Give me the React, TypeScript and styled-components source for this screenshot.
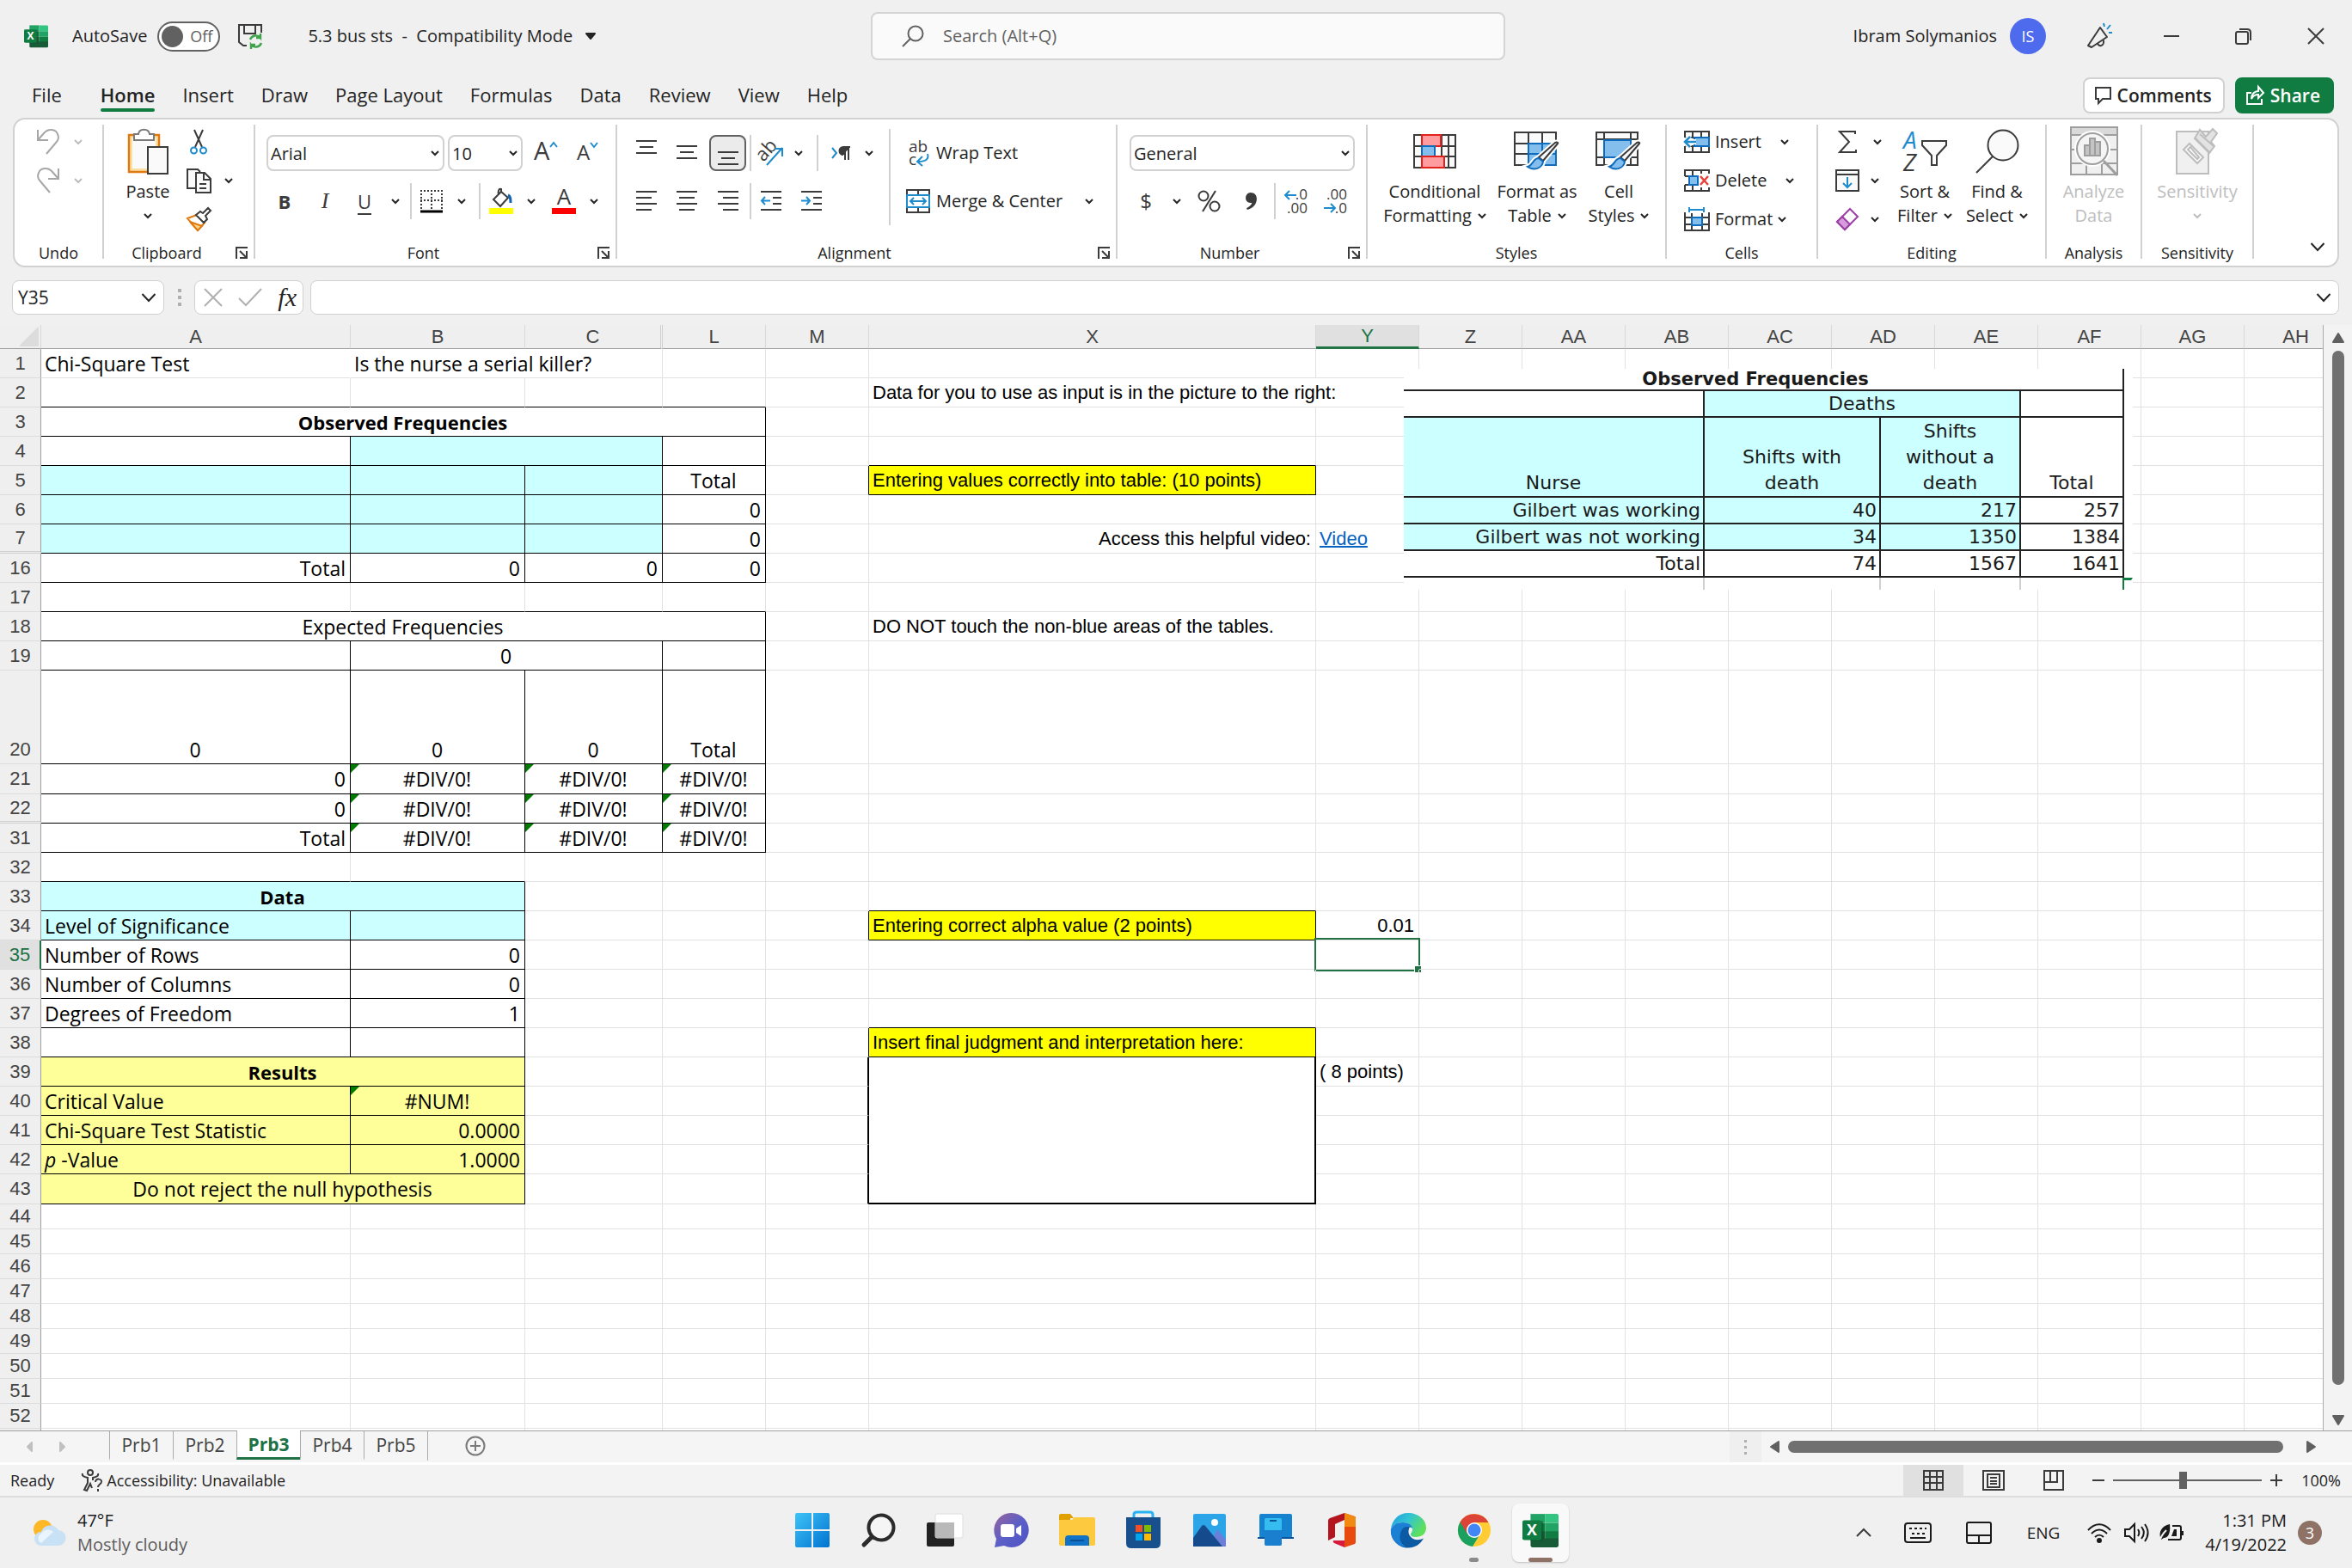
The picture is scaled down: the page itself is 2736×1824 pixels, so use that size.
import React from 'react';
import styled, { createGlobalStyle, css } from 'styled-components';

const ui = '"Open Sans", "Noto Sans", sans-serif';
const arial = '"Liberation Sans", Arial, sans-serif';
const ink = '#242424';
const green = '#107c41';
const blue = '#1e8bcd';

const Global = createGlobalStyle`
  *, *::before, *::after { box-sizing: border-box; }
  html, body { margin: 0; padding: 0; background: #f0f0f0; }
  button, input, select { font: inherit; color: inherit; margin: 0; }
  button { border: 0; background: none; padding: 0; }
  svg { display: block; flex: none; overflow: visible; }
`;

const Shell = styled.div`
  display: flex;
  flex-direction: column;
  height: 100vh;
  overflow: hidden;
  background: #f0f0f0;
  color: ${ink};
  font-family: ${ui};
  font-size: 20px;
  line-height: 28px;
`;

/* ---------- title bar ---------- */
const TitleBar = styled.header`
  display: grid;
  grid-template-columns: minmax(0, 1fr) 738px 985px;
  align-items: center;
  height: 84px;
  flex: none;
`;
const TitleLeft = styled.div`
  display: flex;
  align-items: center;
  padding-left: 28px;
  white-space: nowrap;
`;
const AutoSave = styled.label`
  display: flex;
  align-items: center;
  gap: 12px;
  margin: 0 20px 0 28px;
`;
const SwitchBox = styled.span`
  display: grid;
  align-items: center;
  > * { grid-area: 1 / 1; }
  > span { justify-self: end; padding-right: 9px; color: #616161; font-size: 18px; }
`;
const Switch = styled.input`
  appearance: none;
  width: 73px;
  height: 35px;
  border: 2px solid #616161;
  border-radius: 18px;
  background: #fff;
  padding: 3px;
  &::before {
    content: '';
    display: block;
    width: 25px;
    height: 25px;
    border-radius: 50%;
    background: #616161;
  }
`;
const DocName = styled.button`
  display: flex;
  align-items: center;
  gap: 10px;
  margin-left: 52px;
  white-space: pre;
`;
const SearchBox = styled.label`
  display: flex;
  align-items: center;
  height: 56px;
  gap: 20px;
  padding-left: 34px;
  border: 2px solid #d4d4d4;
  border-radius: 8px;
  background: #fafafa;
  input {
    flex: 1;
    border: 0;
    outline: 0;
    background: none;
    &::placeholder { color: #616161; opacity: 1; }
  }
`;
const TitleRight = styled.div`
  display: flex;
  align-items: center;
  justify-content: flex-end;
`;
const Avatar = styled.span`
  display: grid;
  place-items: center;
  width: 42px;
  height: 42px;
  margin: 0 20px 0 15px;
  border-radius: 50%;
  background: #4f6bed;
  color: #fff;
  font-size: 18px;
`;
const WindowButton = styled.button`
  display: grid;
  place-items: center;
  width: 84px;
  height: 84px;
`;

/* ---------- ribbon tabs ---------- */
const TabRow = styled.nav`
  display: flex;
  align-items: center;
  height: 53px;
  flex: none;
  padding: 0 21px;
`;
const RibbonTab = styled.button<{ $active?: boolean; $first?: boolean }>`
  display: flex;
  flex-direction: column;
  align-items: stretch;
  padding: 2px 16px 0;
  margin-right: ${p => (p.$first ? 13 : 0)}px;
  font-size: 22px;
  line-height: 32px;
  font-weight: ${p => (p.$active ? 600 : 400)};
  &::after {
    content: '';
    height: 4px;
    border-radius: 2px;
    background: ${p => (p.$active ? green : 'transparent')};
  }
`;
const TabSpacer = styled.div`flex: 1;`;
const Pill = styled.button<{ $primary?: boolean }>`
  display: flex;
  align-items: center;
  gap: 7px;
  height: 42px;
  margin-left: 12px;
  padding: 0 ${p => (p.$primary ? 14 : 13)}px 0 ${p => (p.$primary ? 11 : 12)}px;
  border: 2px solid ${p => (p.$primary ? green : '#d1d1d1')};
  border-radius: 8px;
  background: ${p => (p.$primary ? green : '#fff')};
  color: ${p => (p.$primary ? '#fff' : ink)};
  font-weight: 600;
  font-size: 21px;
`;

/* ---------- ribbon ---------- */
const Ribbon = styled.section`
  display: flex;
  flex: none;
  height: 174px;
  margin: 0 15px;
  padding-top: 3px;
  border: 2px solid #d1d1d1;
  border-radius: 14px;
  background: #fff;
`;
const Rule = styled.i`
  width: 2px;
  flex: none;
  margin: 3px 0 8px;
  background: #d1d1d1;
`;
const GroupBox = styled.div<{ $w: number }>`
  display: flex;
  flex-direction: column;
  flex: none;
  width: ${p => p.$w}px;
`;
const GroupBody = styled.div<{ $pad?: number }>`
  display: flex;
  height: 138px;
  padding-left: ${p => p.$pad ?? 0}px;
`;
const GroupLabel = styled.div`
  display: flex;
  align-items: center;
  height: 28px;
  font-size: 18px;
  > span { flex: 1; text-align: center; }
  > button { width: 28px; display: grid; place-items: center; }
`;
const Stack = styled.div<{ $two?: boolean }>`
  display: flex;
  flex-direction: column;
  padding-top: ${p => (p.$two ? 8 : 0)}px;
`;
const Row = styled.div<{ $two?: boolean; $pad?: number }>`
  display: flex;
  align-items: center;
  height: ${p => (p.$two ? 56 : 45)}px;
  padding-left: ${p => p.$pad ?? 0}px;
`;
const Tool = styled.button<{ $w: number }>`
  display: grid;
  place-items: center;
  width: ${p => p.$w}px;
  height: 42px;
`;
const PressedTool = styled(Tool)`
  margin: 0 3px;
  border: 2px solid #616161;
  border-radius: 8px;
  background: #ebebeb;
`;
const Glyph = styled.span<{ $kind?: 'b' | 'i' | 'u' }>`
  font-size: 24px;
  color: #3b3b3b;
  ${p => p.$kind === 'b' && css`font-size: 22px; font-weight: 700;`}
  ${p => p.$kind === 'i' && css`font-family: "Liberation Serif", serif; font-style: italic; font-size: 26px;`}
  ${p => p.$kind === 'u' && css`font-size: 22px; text-decoration: underline; text-decoration-thickness: 2px; text-underline-offset: 5px;`}
`;
const Bar = styled.i<{ $gap: number; $h?: number }>`
  width: 2px;
  height: ${p => p.$h ?? 42}px;
  flex: none;
  margin: 0 ${p => p.$gap}px;
  background: #d1d1d1;
`;
const SelectBox = styled.label<{ $w: number }>`
  display: grid;
  align-items: center;
  width: ${p => p.$w}px;
  margin-right: 4px;
  > * { grid-area: 1 / 1; }
  > svg { justify-self: end; margin-right: 6px; pointer-events: none; }
  > select {
    appearance: none;
    width: 100%;
    height: 42px;
    padding: 2px 3px 0;
    border: 2px solid #d1d1d1;
    border-radius: 8px;
    background: #fff;
  }
`;
const TextTool = styled.button<{ $gap?: number }>`
  display: flex;
  align-items: center;
  height: 42px;
  white-space: nowrap;
  > span:first-child { width: 34px; margin-right: 4px; display: grid; place-items: center; }
  > svg:last-child { margin-left: ${p => p.$gap ?? 8}px; }
`;
const BigTool = styled.button<{ $w: number; $off?: boolean }>`
  display: flex;
  flex-direction: column;
  align-items: center;
  width: ${p => p.$w}px;
  height: 138px;
  color: ${p => (p.$off ? '#bdbdbd' : ink)};
  > i { height: 67px; display: grid; place-items: center; }
  > span { display: flex; align-items: center; gap: 7px; height: 28px; white-space: nowrap; }
`;
const Collapse = styled.button`
  margin: auto 14px 16px auto;
`;

/* ---------- formula bar ---------- */
const FormulaBar = styled.div`
  display: flex;
  align-items: center;
  flex: none;
  height: 67px;
  padding: 2px 15px 0 14px;
`;
const Field = styled.div<{ $w?: number }>`
  display: flex;
  align-items: center;
  ${p => (p.$w ? `width: ${p.$w}px;` : 'flex: 1; min-width: 0;')}
  height: 40px;
  border: 1px solid #d1d1d1;
  border-radius: 8px;
  background: #fff;
  padding: 0 8px 0 6px;
  font-size: 21px;
  input { flex: 1; min-width: 0; border: 0; outline: 0; background: none; padding: 0; }
`;
const Dots = styled.span`
  display: grid;
  gap: 4px;
  justify-content: center;
  width: 35px;
  > i { width: 4px; height: 4px; background: #b0b0b0; }
`;
const FxTools = styled(Field)`
  justify-content: space-between;
  margin-right: 8px;
  padding: 0 7px 0 10px;
`;
const Fx = styled.button`
  font-family: "Liberation Serif", serif;
  font-style: italic;
  font-size: 30px;
  line-height: 34px;
`;

/* ---------- worksheet ---------- */
const SheetArea = styled.main`
  display: flex;
  flex: 1;
  min-height: 0;
`;
const Viewport = styled.div`
  position: relative;
  flex: 1;
  min-width: 0;
  overflow: hidden;
  background: #fff;
  border-right: 1px solid #ababab;
`;
const Grid = styled.table`
  table-layout: fixed;
  width: 0;
  border-collapse: separate;
  border-spacing: 0;
  font-family: ${arial};
  font-size: 22px;
  line-height: 28px;
  color: #000;
`;
const ColHead = styled.th<{ $on?: boolean; $double?: boolean }>`
  height: 28px;
  padding: 0;
  font-weight: 400;
  color: ${p => (p.$on ? '#1b7245' : '#444')};
  background: ${p => (p.$on ? '#e0e0e0' : '#efefef')};
  border-right: ${p => (p.$double ? '3px double #cfcfcf' : '1px solid #d8d8d8')};
  border-bottom: ${p => (p.$on ? '3px solid #217346' : '1px solid #9f9f9f')};
  line-height: 24px;
`;
const Corner = styled(ColHead)`
  > svg { margin-left: 23px; }
`;
const RowHead = styled.th<{ $on?: boolean; $double?: boolean; $low?: boolean }>`
  padding: 0 0 ${p => (p.$low ? 2 : 0)}px;
  font-weight: 400;
  vertical-align: ${p => (p.$low ? 'bottom' : 'middle')};
  color: ${p => (p.$on ? '#1b7245' : '#444')};
  background: ${p => (p.$on ? '#e0e0e0' : '#efefef')};
  border-right: ${p => (p.$on ? '2px solid #217346' : '1px solid #9f9f9f')};
  border-bottom: ${p => (p.$double ? '3px double #cfcfcf' : '1px solid #dcdcdc')};
`;
type Look = { $align?: string; $bg?: string; $edge?: string; $arial?: boolean; $bold?: boolean; $low?: boolean };
const line = '#e1e1e1';
const Cell = styled.td<Look>`
  position: relative;
  padding: 0 5px ${p => (p.$low ? 2 : 0)}px 4px;
  white-space: nowrap;
  text-align: ${p => p.$align ?? 'left'};
  vertical-align: ${p => (p.$low ? 'bottom' : 'middle')};
  background: ${p => p.$bg ?? 'transparent'};
  font-family: ${p => (p.$arial ? arial : ui)};
  font-size: ${p => (p.$arial || p.$bold ? 22 : 23)}px;
  font-weight: ${p => (p.$bold ? 700 : 400)};
  border-right: ${p => (p.$edge?.includes('R') ? 2 : 1)}px solid ${p => (/r/i.test(p.$edge ?? '') ? '#000' : p.$edge?.includes('n') ? 'transparent' : line)};
  border-bottom: ${p => (p.$edge?.includes('B') ? 2 : 1)}px solid ${p => (/b/i.test(p.$edge ?? '') ? '#000' : line)};
  a { color: #0563c1; text-decoration-thickness: 2px; }
`;
const ErrorFlag = styled.i`
  position: absolute;
  left: 0;
  top: 0;
  border-top: 10px solid #007a00;
  border-right: 10px solid transparent;
`;
const Selection = styled.i`
  position: absolute;
  inset: -3px -2px -3px -2px;
  border: 2px solid #217346;
  &::after {
    content: '';
    position: absolute;
    right: -3px;
    bottom: -3px;
    width: 8px;
    height: 8px;
    background: #217346;
    border: 1px solid #fff;
    border-width: 1px 0 0 1px;
  }
`;
const Picture = styled.table`
  position: absolute;
  left: 1633px;
  top: 51px;
  width: 848px;
  table-layout: fixed;
  border-collapse: separate;
  border-spacing: 0;
  background: #fff;
  color: #1a1a1a;
  font-family: "DejaVu Sans", sans-serif;
  font-size: 22px;
  line-height: 28px;
`;
const PCell = styled.td<{ $blue?: boolean; $a?: string; $tall?: boolean }>`
  padding: 0 3px;
  text-align: ${p => p.$a ?? 'right'};
  vertical-align: bottom;
  white-space: nowrap;
  line-height: ${p => (p.$tall ? 30 : 28)}px;
  background: ${p => (p.$blue ? '#ccffff' : '#fff')};
  border-bottom: 2px solid #222;
  border-right: 2px solid #222;
`;
const PTitle = styled(PCell)`
  padding: 0 18px 0 0;
  font-size: 21px;
  font-weight: 700;
  line-height: 24px;
`;
const PEdge = styled.td<{ $c?: string; $green?: boolean }>`
  padding: 0;
  border-right: 2px solid ${p => p.$c ?? 'transparent'};
  border-top: ${p => (p.$green ? '3px solid #107c41' : '0')};
`;
const VScroll = styled.div`
  display: flex;
  flex-direction: column;
  align-items: center;
  width: 33px;
  padding: 8px 0 5px;
  background: #f3f3f3;
`;
const VThumb = styled.div`
  flex: 1;
  width: 14px;
  margin: 8px 0 34px;
  border-radius: 7px;
  background: #707070;
`;

/* ---------- sheet tabs and status bar ---------- */
const SheetTabs = styled.div`
  display: flex;
  align-items: center;
  flex: none;
  height: 40px;
  border-top: 1px solid #9f9f9f;
  border-bottom: 3px solid #fff;
  background: #f5f5f5;
`;
const TabArrows = styled.div`
  display: flex;
  gap: 29px;
  width: 127px;
  padding-left: 30px;
`;
const SheetTab = styled.button<{ $on?: boolean }>`
  align-self: flex-start;
  width: 74px;
  height: 34px;
  margin-top: ${p => (p.$on ? -1 : 0)}px;
  border-left: 1px solid #ababab;
  border-bottom: 3px solid ${p => (p.$on ? '#217346' : 'transparent')};
  background: ${p => (p.$on ? '#fff' : 'transparent')};
  color: ${p => (p.$on ? '#1b7245' : '#444')};
  font-weight: ${p => (p.$on ? 700 : 400)};
  font-size: 21px;
  line-height: 30px;
`;
const AddSheet = styled.button`
  height: 34px;
  align-self: flex-start;
  padding-left: 43px;
  border-left: 1px solid #ababab;
`;
const HScroll = styled.div`
  display: flex;
  align-items: center;
  width: 724px;
  margin-left: auto;
  padding-right: 41px;
`;
const HDots = styled(Dots)`
  width: 37px;
  height: 36px;
  align-content: center;
  background: #efefef;
  > i { width: 3px; height: 3px; }
`;
const HThumb = styled.div`
  flex: 1;
  height: 14px;
  margin: 0 26px 0 9px;
  border-radius: 7px;
  background: #707070;
`;
const StatusBar = styled.footer`
  display: flex;
  align-items: center;
  flex: none;
  height: 36px;
  padding: 0 13px 0 12px;
  background: #f3f3f3;
  font-size: 18px;
`;
const Access = styled.button`
  display: flex;
  align-items: center;
  gap: 4px;
  margin: 0 auto 0 31px;
`;
const ViewButton = styled.button<{ $on?: boolean }>`
  display: grid;
  place-items: center;
  width: 70px;
  height: 36px;
  background: ${p => (p.$on ? '#e0e0e0' : 'transparent')};
`;
const ZoomStep = styled.button`
  display: grid;
  place-items: center;
  width: 34px;
`;
const Zoom = styled.input`
  appearance: none;
  width: 173px;
  height: 20px;
  background: linear-gradient(#616161, #616161) center / 100% 2px no-repeat;
  &::-webkit-slider-thumb {
    appearance: none;
    width: 9px;
    height: 20px;
    background: #616161;
  }
`;
const ZoomValue = styled.output`
  width: 58px;
  text-align: right;
`;

/* ---------- taskbar ---------- */
const Taskbar = styled.footer`
  display: grid;
  grid-template-columns: 1fr auto 1fr;
  align-items: center;
  flex: none;
  height: 84px;
  border-top: 2px solid #dedede;
  background: #f0f0f0;
`;
const Weather = styled.button`
  display: flex;
  align-items: center;
  gap: 14px;
  padding-left: 38px;
  text-align: left;
  color: #1a1a1a;
  span { display: block; }
  span + span { color: #5c5c5c; }
`;
const Dock = styled.div`
  display: flex;
  gap: 11px;
`;
const DockButton = styled.button<{ $on?: boolean; $dot?: string; $dw?: number }>`
  display: grid;
  grid-template-rows: 62px 6px;
  justify-items: center;
  align-items: center;
  width: 66px;
  height: 68px;
  border-radius: 8px;
  background: ${p => (p.$on ? '#f9f9f9' : 'transparent')};
  box-shadow: ${p => (p.$on ? '0 1px 2px rgba(0,0,0,0.2)' : 'none')};
  &::after {
    content: '';
    width: ${p => p.$dw ?? 0}px;
    height: 5px;
    border-radius: 3px;
    background: ${p => p.$dot ?? 'transparent'};
  }
`;
const Tray = styled.div`
  display: flex;
  align-items: center;
  justify-content: flex-end;
  padding-right: 35px;
  color: #1a1a1a;
`;
const TrayButton = styled.button<{ $w: number }>`
  display: grid;
  place-items: center;
  width: ${p => p.$w}px;
  font-size: 19px;
`;
const Clock = styled.button`
  text-align: right;
  margin: 0 13px 0 12px;
  width: 101px;
`;
const Badge = styled.span`
  display: grid;
  place-items: center;
  width: 28px;
  height: 28px;
  border-radius: 50%;
  background: #8e7265;
  color: #fff;
  font-size: 18px;
`;

/* ---------- icons ---------- */
type IconProps = { w: number; h: number; children: React.ReactNode; s?: string; sw?: number };
const Ico = ({ w, h, children, s = '#3b3b3b', sw = 2 }: IconProps) => (
  <svg width={w} height={h} viewBox={`0 0 ${w} ${h}`} fill="none" stroke={s} strokeWidth={sw}>{children}</svg>
);
const Chev = ({ c = ink, big }: { c?: string; big?: boolean }) =>
  big ? <Ico w={18} h={12} s={c}><path d="M1.500 2l7.500 8 7.500-8" /></Ico> : <Ico w={10} h={8} s={c}><path d="M1 2l4 4 4-4" /></Ico>;
const Excel = ({ size }: { size: number }) => (
  <svg width={size} height={size} viewBox="0 0 40 40">
    <path d="M9 2h16v10H9z" fill="#21a366" /><path d="M25 2h13a2 2 0 012 2v8H25z" fill="#33c481" />
    <path d="M9 12h16v9H9z" fill="#107c41" /><path d="M25 12h15v9H25z" fill="#21a366" />
    <path d="M9 21h16v9H9z" fill="#185c37" /><path d="M25 21h15v9H25z" fill="#107c41" />
    <path d="M9 29h31v8a2 2 0 01-2 2H11a2 2 0 01-2-2z" fill="#185c37" />
    <rect x="9" y="10" width="14" height="22" fill="#0b4a29" opacity=".5" />
    <rect x="0" y="9" width="21" height="22" rx="2" fill="#107c41" />
    <text x="10.500" y="26" fontSize="17" fontWeight="700" fill="#fff" textAnchor="middle" fontFamily={ui}>X</text>
  </svg>
);
const Save = () => (
  <Ico w={30} h={30}>
    <path d="M11 26H7l-5-4V2h26v9M8 2v10h13V2" />
    <g stroke="#3fa34d" strokeWidth="2.400"><path d="M15 19a7 7 0 0112-2v-5M27 17h-5M28 23a7 7 0 01-12 2v5M16 25h5" /></g>
  </Ico>
);
const Pen = () => (
  <Ico w={30} h={30}>
    <path d="M16 5l8 11L6 28l-4-2zM13 23c1 5 8 4 7-3" strokeLinejoin="round" />
    <path d="M20 0l1 4M28 2l-4 5M26 11h4" stroke={blue} />
  </Ico>
);
const Launcher = () => <Ico w={14} h={14}><path d="M1 14V1h13M5 5l8 8M13 5v8H5" /></Ico>;
const UndoIcon = ({ flip }: { flip?: boolean }) => (
  <Ico w={28} h={30} s="#a6a6a6">
    <path d={flip ? 'M26 1v12H14M26 13l-7-8C14-1 5 0 3 6c-2 4 0 8 2 10l11 13' : 'M2 1v12h12M2 13l7-8c5-6 14-5 16 1 2 4 0 8-2 10L12 29'} />
  </Ico>
);
const Clipboard = () => (
  <Ico w={48} h={54}>
    <rect x="2" y="8" width="35" height="43" fill="#fbe0a4" stroke="#e07a10" strokeWidth="2.500" />
    <rect x="6" y="12" width="27" height="35" fill="#fafafa" stroke="none" />
    <path d="M8 14V7h5c1-7 12-7 13 0h5v7z" fill="#fff" stroke="#7a7a7a" />
    <rect x="24" y="22" width="23" height="31" fill="#fafafa" />
  </Ico>
);
const Cut = () => (
  <Ico w={20} h={30}>
    <path d="M5 1l9 20M15 1L6 21" /><circle cx="4.500" cy="25" r="3.500" stroke={blue} /><circle cx="15.500" cy="25" r="3.500" stroke={blue} />
  </Ico>
);
const Copy = () => (
  <Ico w={30} h={30}>
    <path d="M11 24H2V2h12l3 3" fill="#fafafa" /><path d="M12 6h10l7 7v16H12zM21 6v8h8M16 19h8M16 24h8" fill="#fafafa" />
  </Ico>
);
const Brush = () => (
  <Ico w={30} h={28}>
    <path d="M2 13l11-4 9 9-8 9z" fill="#fff" stroke="#e07a10" /><path d="M5 17l14 5-5 5z" fill="#fbd58b" stroke="#e07a10" />
    <path d="M12 9l5-4 3 2 6-6 3 3-6 6 2 4-4 4z" fill="#fff" />
  </Ico>
);
const GrowA = ({ down }: { down?: boolean }) => (
  <svg width="28" height="26" viewBox="0 0 28 26">
    <text x={down ? 2 : 0} y="21" fontSize={down ? 24 : 29} fill="#3b3b3b" fontFamily={ui}>A</text>
    <path d={down ? 'M18 1l4 5 4-5' : 'M19 6l4-5 4 5'} fill="none" stroke={blue} strokeWidth="2" />
  </svg>
);
const Borders = () => (
  <Ico w={28} h={28}>
    <path d="M1 2h26M2 1v22M26 1v22M14 1v22M1 13h26" strokeDasharray="2 2" /><path d="M1 26h26" stroke="#000" strokeWidth="3" />
  </Ico>
);
const Fill = () => (
  <Ico w={28} h={30}>
    <path d="M14 4L5 13l8 8 9-10-8-7V1c-3-1-4 3-3 7" /><path d="M22 8c3 1 3 5 3 9" stroke="#1464b4" strokeWidth="3" />
    <rect x="0" y="23" width="28" height="7" fill="#ff0" stroke="none" />
  </Ico>
);
const FontColor = () => (
  <svg width="28" height="30" viewBox="0 0 28 30">
    <text x="14" y="19" fontSize="26" fill="#3b3b3b" textAnchor="middle" fontFamily={ui}>A</text>
    <rect x="0" y="23" width="28" height="7" fill="#f00" />
  </svg>
);
const Lines = ({ rows, y }: { rows: [number, number][]; y?: number }) => (
  <Ico w={26} h={30}>{rows.map(([a, b], i) => <path key={i} d={`M${a} ${(y ?? 4) + i * 7}H${b}`} />)}</Ico>
);
const Indent = ({ out }: { out?: boolean }) => (
  <Ico w={26} h={30}>
    <path d="M1 4h24M15 11h10M15 18h10M1 25h24" />
    <path d={out ? 'M12 14.500H2M6 10l-4 4.500L6 19' : 'M1 14.500h10M7 10l4 4.500L7 19'} stroke={blue} />
  </Ico>
);
const Orient = () => (
  <svg width="30" height="30" viewBox="0 0 30 30">
    <text x="6" y="26" fontSize="22" fill="#3b3b3b" fontFamily={ui} transform="rotate(-48 6 26)">ab</text>
    <path d="M10 29L28 9M19 10h9v9" fill="none" stroke={blue} strokeWidth="2" />
  </svg>
);
const Para = () => (
  <svg width="24" height="24" viewBox="0 0 24 24">
    <path d="M2 6l5 6-5 6" fill="none" stroke={blue} strokeWidth="2" />
    <path d="M23 5h-8a4 4 0 000 9M17 5v15M21 5v15M15 5v9" fill="#3b3b3b" stroke="#3b3b3b" strokeWidth="2" />
  </svg>
);
const Wrap = () => (
  <svg width="28" height="34" viewBox="0 0 28 34">
    <g fontSize="19" fill="#3b3b3b" fontFamily={ui}><text x="3" y="16">ab</text><text x="3" y="31">c</text></g>
    <path d="M25 18c2 6-2 9-11 9M19 21l-6 6 6 5" fill="none" stroke={blue} strokeWidth="2" />
  </svg>
);
const Merge = () => (
  <Ico w={28} h={28}>
    <path d="M1 1h26v26H1zM14 1v6M14 21v6" /><rect x="1" y="7" width="26" height="14" fill="#fff" stroke={blue} />
    <path d="M5 14h18M9 10l-4 4 4 4M19 10l4 4-4 4" stroke={blue} />
  </Ico>
);
const Decimals = ({ less }: { less?: boolean }) => (
  <svg width="30" height="32" viewBox="0 0 30 32">
    <g fontSize="17" fill="#3b3b3b" fontFamily={ui} textAnchor="end"><text x="28" y="14">{less ? '.00' : '.0'}</text><text x="28" y="30">{less ? '.0' : '.00'}</text></g>
    <path d={less ? 'M1 24h13M9 19l5 5-5 5' : 'M15 9H2M7 4L2 9l5 5'} fill="none" stroke={blue} strokeWidth="2" />
  </svg>
);
const PaintBrush = () => (
  <g>
    <path d="M51 16L34 36l-5-4 19-17c2-1 4 0 3 1zM29 33c-7 0-6 8-13 10 7 5 17 2 18-6z" stroke="#fff" strokeWidth="6" />
    <path d="M51 16L34 36l-5-4 19-17c2-1 4 0 3 1z" fill="#fafafa" stroke="#3b3b3b" strokeWidth="2" />
    <path d="M29 33c-7 0-6 8-13 10 7 5 17 2 18-6z" fill="#83beec" stroke="#0f6cbd" strokeWidth="2" />
  </g>
);
const CondFormat = () => (
  <Ico w={52} h={44}>
    <path d="M2 3h48v38H2zM2 16h48M2 28h48M11 3v38M34 3v38M42 3v38" fill="#fafafa" />
    <rect x="11" y="3" width="22" height="13" fill="#ff9ca0" stroke="#e3211b" /><rect x="11" y="16" width="15" height="12" fill="#83beec" stroke="#0f6cbd" />
    <rect x="11" y="28" width="26" height="13" fill="#ff9ca0" stroke="#e3211b" />
  </Ico>
);
const FormatTable = () => (
  <Ico w={54} h={50}>
    <path d="M1 3h48v38H1zM1 16h48M1 28h48M17 3v38M33 3v38" fill="#fafafa" />
    <path d="M17 16h32v25H17zM17 28h32M33 16v25" fill="#83beec" stroke="#0f6cbd" /><PaintBrush />
  </Ico>
);
const CellStyles = () => (
  <Ico w={54} h={50}>
    <path d="M1 3h48v38H1zM1 11h48M1 32h48M10 3v38M41 3v38" fill="#fafafa" />
    <rect x="10" y="12" width="31" height="20" fill="#83beec" stroke="#0f6cbd" /><PaintBrush />
  </Ico>
);
const CellIcon = ({ kind }: { kind: 'insert' | 'delete' | 'format' }) => (
  <Ico w={30} h={28}>
    {kind === 'format' ? (
      <>
        <path d="M1 6v21h28V6M1 12h28M1 20h28M9 7v20M21 7v20" /><rect x="9" y="12" width="12" height="9" fill="#83beec" stroke="#0f6cbd" />
        <path d="M6 3h17M6 0v6M23 0v6" stroke={blue} />
      </>
    ) : (
      <>
        <path d="M1 9V2h28v24H1v-7M10 2v7M20 2v7M1 9h28M1 19h28M10 19v7M20 19v7" />
        {kind === 'insert' ? (
          <><rect x="12" y="9" width="17" height="10" fill="#83beec" stroke="#0f6cbd" /><path d="M14 14H1M7 8l-6 6 6 6" stroke="#fff" strokeWidth="6" /><path d="M14 14H1M7 8l-6 6 6 6" stroke={blue} strokeWidth="2.500" /></>
        ) : (
          <><rect x="6" y="9" width="10" height="10" fill="#83beec" stroke="#0f6cbd" /><path d="M17 6h13v16H17z" fill="#fff" stroke="none" /><path d="M19 9l9 10M28 9l-9 10" stroke="#e8413c" strokeWidth="2.500" /></>
        )}
      </>
    )}
  </Ico>
);
const Sigma = () => <Ico w={22} h={28}><path d="M20 5V2H2l11 12L2 26h19v-3" /></Ico>;
const FillDown = () => (
  <Ico w={28} h={26}><path d="M1 1h26v24H1zM1 6h26" fill="#fafafa" /><path d="M14 9v12M9 16l5 5 5-5" stroke={blue} /></Ico>
);
const Eraser = () => (
  <Ico w={28} h={28} s="#9b3fa5"><path d="M17 2l9 9-15 15-9-9z" fill="#fafafa" /><path d="M8 11l9 9-6 6-9-9z" fill="#d79bdd" /></Ico>
);
const SortFilter = () => (
  <svg width="52" height="52" viewBox="0 0 52 52">
    <text x="1" y="23" fontSize="28" fill={blue} fontFamily={ui}>A</text><text x="1" y="49" fontSize="28" fill="#3b3b3b" fontFamily={ui}>Z</text>
    <path d="M23 14h28v5L40 31v11h-6V31L23 19z" fill="#fafafa" stroke="#3b3b3b" strokeWidth="2" />
  </svg>
);
const Find = () => <Ico w={52} h={52}><circle cx="33" cy="19" r="17.500" fill="#fafafa" /><path d="M21 32L2 51" /></Ico>;
const Analyze = () => (
  <Ico w={56} h={58} s="#9e9e9e">
    <path d="M1 1h54v55H1z" fill="#f0f0f0" /><path d="M1 1h54v9H1z" fill="#d9d9d9" /><path d="M1 27h54M1 43h54M19 43v13M37 43v13" />
    <circle cx="26" cy="26" r="18" fill="#f5f5f5" stroke="#fff" strokeWidth="6" /><circle cx="26" cy="26" r="18" fill="#f5f5f5" />
    <path d="M39 40l16 17" strokeWidth="3" /><path d="M17 22h6v12h-6zM23 14h6v20h-6zM29 18h6v16h-6z" fill="#c4c4c4" />
  </Ico>
);
const Sensitivity = () => (
  <Ico w={50} h={56} s="#bdbdbd">
    <rect x="1" y="5" width="37" height="49" fill="#f0f0f0" /><path d="M9 26l7-7 16 16-7 7zM14 26l3-3 10 12-2 2z" fill="#fafafa" />
    <path d="M22 13l6-10 7 8 8-9 5 5-7 10 4 5-6 8z" fill="#e3e3e3" /><path d="M22 12l18 18M28 8l16 14" />
  </Ico>
);
const SearchIcon = () => <Ico w={26} h={26} s="#616161"><circle cx="16" cy="10" r="8.500" /><path d="M10 16L1 25" /></Ico>;
const AccessIcon = () => (
  <Ico w={26} h={26}>
    <circle cx="11" cy="4" r="3" /><path d="M2 5c-1 3 2 4 6 5v6L4 24l3 1 4-8 2 5M20 5c1 3-2 4-6 5v3" />
    <path d="M17 15c0-5 8-4 7 0-1 3-4 3-4 6M20 23v3" />
  </Ico>
);
const Tri = ({ d, c = '#606060', w = 14, h = 14 }: { d: string; c?: string; w?: number; h?: number }) => (
  <svg width={w} height={h} viewBox={`0 0 ${w} ${h}`}><path d={d} fill={c} stroke={c} strokeWidth="2" strokeLinejoin="round" /></svg>
);

const dock: { name: string; icon: React.ReactNode; on?: boolean; dot?: string; dw?: number }[] = [
  { name: 'Start', icon: <svg width="40" height="40" viewBox="0 0 40 40"><defs><linearGradient id="win" x1="0" y1="0" x2="1" y2="1"><stop offset="0" stopColor="#3ec4f7" /><stop offset="1" stopColor="#0072d0" /></linearGradient></defs><path d="M0 2q0-2 2-2h17v19H0zM21 0h17q2 0 2 2v17H21zM0 21h19v19H2q-2 0-2-2zM21 21h19v17q0 2-2 2H21z" fill="url(#win)" /></svg> },
  { name: 'Search', icon: <Ico w={40} h={40} s="#2b2b2b" sw={4}><circle cx="23" cy="17" r="14.500" fill="#f5f5f5" /><path d="M12 28L3 37" strokeWidth="5" strokeLinecap="round" /></Ico> },
  { name: 'Task View', icon: <svg width="42" height="40" viewBox="0 0 42 40"><rect x="0" y="11" width="32" height="28" rx="2" fill="#222" /><rect x="10" y="1" width="32" height="28" rx="2" fill="#fff" stroke="#dcdcdc" /><path d="M10 11h22v18H12q-2 0-2-2z" fill="#b9b9b9" /></svg> },
  { name: 'Chat', icon: <svg width="42" height="42" viewBox="0 0 42 42"><defs><linearGradient id="chat" x1="0" y1="0" x2="1" y2="1"><stop offset="0" stopColor="#9a6499" /><stop offset=".5" stopColor="#5b5fc7" /><stop offset="1" stopColor="#4f52c4" /></linearGradient></defs><path d="M21 1a20 20 0 11-8 38l-11 2 2-10A20 20 0 0121 1z" fill="url(#chat)" /><rect x="9" y="14" width="16" height="15" rx="3" fill="#fff" /><path d="M27 19l6-4v13l-6-4z" fill="#fff" /></svg> },
  { name: 'File Explorer', icon: <svg width="42" height="40" viewBox="0 0 42 40"><path d="M0 3q0-2 2-2h11l4 5h-4v8H0z" fill="#e0a100" /><path d="M0 8h15l3-3h22q2 0 2 2v29q0 2-2 2H2q-2 0-2-2z" fill="#fdc93e" /><path d="M7 38V30q0-4 4-4h20q4 0 4 4v8z" fill="#1173c8" /><path d="M13 32h16" stroke="#0b4f92" strokeWidth="2" /></svg> },
  { name: 'Microsoft Store', icon: <svg width="42" height="44" viewBox="0 0 42 44"><path d="M10 9V4q0-3 3-3h16q3 0 3 3v5" fill="none" stroke="#27b3f2" strokeWidth="3" /><path d="M1 7h40v30q0 6-6 6H7q-6 0-6-6z" fill="#17508c" /><path d="M12 16h8v8h-8z" fill="#f25022" /><path d="M22 16h8v8h-8z" fill="#7fba00" /><path d="M12 26h8v8h-8z" fill="#00a4ef" /><path d="M22 26h8v8h-8z" fill="#ffb900" /></svg> },
  { name: 'Photos', icon: <svg width="38" height="38" viewBox="0 0 38 38"><rect width="38" height="38" rx="2" fill="#2ba5e8" /><path d="M18 38L28 18l10 12v8z" fill="#6b7fd8" /><path d="M0 28l10-14q2-2 4 0l20 24H0z" fill="#154a8c" /><circle cx="25" cy="10" r="4" fill="#fff" /></svg> },
  { name: 'Your Phone', icon: <svg width="42" height="40" viewBox="0 0 42 40"><rect x="2" y="1" width="38" height="28" rx="2" fill="#1583d0" /><path d="M0 28h42v2H0z" fill="#0a549c" /><rect x="8" y="6" width="20" height="32" rx="2" fill="#35bdf0" /><path d="M8 20h20v16q0 2-2 2H10q-2 0-2-2z" fill="#1b7fcf" /><path d="M14 9h8" stroke="#0a549c" strokeWidth="2" /></svg> },
  { name: 'Office', icon: <svg width="34" height="42" viewBox="0 0 34 42"><path d="M1 10q0-2 2-3L20 1v8l-11 5v15l-8 4z" fill="#b3141e" /><path d="M20 1l12 4q1 0 1 2v28q0 1-1 2l-12 4z" fill="#e8490f" /><path d="M20 1l12 4q1 0 1 2v10H20z" fill="#f08a12" /><path d="M7 33h13v8L8 36q-2-1-1-3z" fill="#d81b3c" /></svg> },
  { name: 'Microsoft Edge', icon: <svg width="42" height="42" viewBox="0 0 42 42"><defs><linearGradient id="edge" x1="0" y1="0" x2="1" y2=".5"><stop offset="0" stopColor="#1b9de2" /><stop offset=".5" stopColor="#33c4d3" /><stop offset="1" stopColor="#5fe05a" /></linearGradient></defs><path d="M1 20c-1 11 8 21.500 20 21.500 8 0 14-4 18-11-6 3-13 2-16-3-3-5-1-9 1-12L8 13z" fill="#0c59a4" /><path d="M1 20C2 9 10 1 21 1c12 0 21 8 21 17 0 7-5 11-12 11-4 0-6-1-6-3s2-2 2-6c0-5-5-8-11-8C8 12 3 15 1 20z" fill="url(#edge)" /><path d="M15 12C8 12 3 15 1 20c-1 11 7 20 18 21-6-4-9-9-7-16 1-5 4-8 8-8 3 0 5 1 6 2 0-4-5-7-11-7z" fill="#1b7fd4" /></svg> },
  { name: 'Google Chrome', dot: '#8a8a8a', dw: 11, icon: <svg width="40" height="40" viewBox="0 0 40 40"><circle cx="20" cy="20" r="19" fill="#fc3" /><path d="M3.500 10.500A19 19 0 0018 39l9-15-7-4z" fill="#1aa15f" /><path d="M3.500 10.500A19 19 0 0136.500 11H20l-8 13.500z" fill="#db4437" /><circle cx="20" cy="20" r="9" fill="#fff" /><circle cx="20" cy="20" r="7.500" fill="#4285f4" /></svg> },
  { name: 'Excel', on: true, dot: '#8e7265', dw: 28, icon: <Excel size={42} /> },
];

/* ---------- worksheet data ---------- */
const columns: [string, number][] = [
  ['A', 360], ['B', 203], ['C', 160], ['L', 120], ['M', 120], ['X', 520], ['Y', 120], ['Z', 120], ['AA', 120], ['AB', 120],
  ['AC', 120], ['AD', 120], ['AE', 120], ['AF', 120], ['AG', 120], ['AH', 120],
];
type Spec = { t?: React.ReactNode; a?: string; bg?: string; e?: string; ar?: boolean; bold?: boolean; span?: number; rows?: number; err?: boolean; sel?: boolean; skip?: boolean };
type RowSpec = { n: number; h?: number; low?: boolean; c?: Record<string, Spec> };
const cyan = '#ccffff';
const sand = '#ffff99';
const yellow = '#ffff00';
const div0: Spec = { t: '#DIV/0!', a: 'center', e: 'rb', err: true };
const hidden: Spec = { skip: true };

const rows: RowSpec[] = [
  { n: 1, c: { A: { t: 'Chi-Square Test', e: 'n' }, B: { t: 'Is the nurse a serial killer?', span: 2 } } },
  { n: 2, c: { A: { e: 'b' }, B: { e: 'b' }, C: { e: 'b' }, L: { e: 'b' }, X: { t: 'Data for you to use as input is in the picture to the right:', ar: true, span: 2 } } },
  { n: 3, c: { A: { t: 'Observed Frequencies', a: 'center', bold: true, span: 4, e: 'rb' } } },
  { n: 4, c: { A: { e: 'rb' }, B: { bg: cyan, span: 2, e: 'rb' }, L: { e: 'rb' }, X: { e: 'b' } } },
  { n: 5, c: { A: { bg: cyan, e: 'rb' }, B: { bg: cyan, e: 'rb' }, C: { bg: cyan, e: 'rb' }, L: { t: 'Total', a: 'center', e: 'rb' }, M: { e: 'r' }, X: { t: 'Entering values correctly into table: (10 points)', ar: true, bg: yellow, e: 'rb' } } },
  { n: 6, c: { A: { bg: cyan, e: 'rb' }, B: { bg: cyan, e: 'rb' }, C: { bg: cyan, e: 'rb' }, L: { t: '0', a: 'right', e: 'rb' } } },
  { n: 7, c: { A: { bg: cyan, e: 'rb' }, B: { bg: cyan, e: 'rb' }, C: { bg: cyan, e: 'rb' }, L: { t: '0', a: 'right', e: 'rb' }, X: { t: 'Access this helpful video:', a: 'right', ar: true }, Y: { t: <a href="#video">Video</a>, ar: true } } },
  { n: 16, c: { A: { t: 'Total', a: 'right', e: 'rb' }, B: { t: '0', a: 'right', e: 'rb' }, C: { t: '0', a: 'right', e: 'rb' }, L: { t: '0', a: 'right', e: 'rb' } } },
  { n: 17, c: { A: { e: 'b' }, B: { e: 'b' }, C: { e: 'b' }, L: { e: 'b' } } },
  { n: 18, c: { A: { t: 'Expected Frequencies', a: 'center', span: 4, e: 'rb' }, X: { t: 'DO NOT touch the non-blue areas of the tables.', ar: true } } },
  { n: 19, c: { A: { e: 'rb' }, B: { t: '0', a: 'center', span: 2, e: 'rb' }, L: { e: 'rb' } } },
  { n: 20, h: 109, low: true, c: { A: { t: '0', a: 'center', e: 'rb' }, B: { t: '0', a: 'center', e: 'rb' }, C: { t: '0', a: 'center', e: 'rb' }, L: { t: 'Total', a: 'center', e: 'rb' } } },
  { n: 21, h: 35, c: { A: { t: '0', a: 'right', e: 'rb' }, B: div0, C: div0, L: div0 } },
  { n: 22, c: { A: { t: '0', a: 'right', e: 'rb' }, B: div0, C: div0, L: div0 } },
  { n: 31, c: { A: { t: 'Total', a: 'right', e: 'rb' }, B: div0, C: div0, L: div0 } },
  { n: 32, c: { A: { e: 'b' }, B: { e: 'b' } } },
  { n: 33, c: { A: { t: 'Data', a: 'center', bold: true, bg: cyan, span: 2, e: 'rb' }, X: { e: 'b' } } },
  { n: 34, c: { A: { t: 'Level of Significance', bg: cyan, e: 'rb' }, B: { bg: cyan, e: 'rb' }, M: { e: 'r' }, X: { t: 'Entering correct alpha value (2 points)', ar: true, bg: yellow, e: 'rb' }, Y: { t: '0.01', a: 'right', ar: true } } },
  { n: 35, c: { A: { t: 'Number of Rows', e: 'rb' }, B: { t: '0', a: 'right', e: 'rb' }, Y: { sel: true } } },
  { n: 36, c: { A: { t: 'Number of Columns', e: 'rb' }, B: { t: '0', a: 'right', e: 'rb' } } },
  { n: 37, c: { A: { t: 'Degrees of Freedom', e: 'rb' }, B: { t: '1', a: 'right', e: 'rb' }, X: { e: 'b' } } },
  { n: 38, c: { A: { e: 'rb' }, B: { e: 'rb' }, M: { e: 'r' }, X: { t: 'Insert final judgment and interpretation here:', ar: true, bg: yellow, e: 'rb' } } },
  { n: 39, c: { A: { t: 'Results', a: 'center', bold: true, bg: sand, span: 2, e: 'rb' }, M: { e: 'R' }, X: { rows: 5, e: 'RB' }, Y: { t: '( 8 points)', ar: true } } },
  { n: 40, c: { A: { t: 'Critical Value', bg: sand, e: 'rb' }, B: { t: '#NUM!', a: 'center', bg: sand, e: 'rb', err: true }, M: { e: 'R' }, X: hidden } },
  { n: 41, c: { A: { t: 'Chi-Square Test Statistic', bg: sand, e: 'rb' }, B: { t: '0.0000', a: 'right', bg: sand, e: 'rb' }, M: { e: 'R' }, X: hidden } },
  { n: 42, c: { A: { t: <><em>p</em> -Value</>, bg: sand, e: 'rb' }, B: { t: '1.0000', a: 'right', bg: sand, e: 'rb' }, M: { e: 'R' }, X: hidden } },
  { n: 43, h: 35, c: { A: { t: 'Do not reject the null hypothesis', a: 'center', bg: sand, span: 2, e: 'rb' }, M: { e: 'R' }, X: hidden } },
  ...[44, 45, 46, 47, 48, 49, 50, 51, 52, 53].map(n => ({ n, h: 29 })),
];

const RowCells = ({ row }: { row: RowSpec }) => {
  const out: React.ReactNode[] = [];
  for (let i = 0; i < columns.length; i++) {
    const key = columns[i][0];
    const s: Spec = row.c?.[key] ?? {};
    if (s.skip) continue;
    out.push(
      <Cell key={key} colSpan={s.span} rowSpan={s.rows} $align={s.a} $bg={s.bg} $edge={s.e} $arial={s.ar} $bold={s.bold} $low={row.low}>
        {s.err && <ErrorFlag />}
        {s.sel && <Selection />}
        {s.t}
      </Cell>,
    );
    i += (s.span ?? 1) - 1;
  }
  return <>{out}</>;
};

const Group = ({ w, label, pad, launch, children }: { w: number; label: string; pad?: number; launch?: boolean; children: React.ReactNode }) => (
  <>
    <GroupBox $w={w}>
      <GroupBody $pad={pad}>{children}</GroupBody>
      <GroupLabel>
        <span>{label}</span>
        {launch && <button aria-label={`${label} settings`}><Launcher /></button>}
      </GroupLabel>
    </GroupBox>
    <Rule />
  </>
);

export default function App() {
  return (
    <Shell>
      <Global />
      <TitleBar>
        <TitleLeft>
          <Excel size={28} />
          <AutoSave>
            AutoSave
            <SwitchBox><Switch type="checkbox" role="switch" /><span>Off</span></SwitchBox>
          </AutoSave>
          <button aria-label="Save"><Save /></button>
          <DocName>5.3 bus sts  -  Compatibility Mode <Tri w={12} h={9} d="M1 1h10L6 7z" c={ink} /></DocName>
        </TitleLeft>
        <SearchBox>
          <SearchIcon />
          <input type="search" aria-label="Search" placeholder="Search (Alt+Q)" />
        </SearchBox>
        <TitleRight>
          Ibram Solymanios
          <Avatar>IS</Avatar>
          <WindowButton aria-label="Coming soon"><Pen /></WindowButton>
          <WindowButton aria-label="Minimize"><Ico w={18} h={18}><path d="M0 9h18" /></Ico></WindowButton>
          <WindowButton aria-label="Restore"><Ico w={20} h={20}><rect x="1" y="5" width="14" height="14" rx="2" /><path d="M5 2h9q4 0 4 4v9" /></Ico></WindowButton>
          <WindowButton aria-label="Close"><Ico w={20} h={20}><path d="M1 1l18 18M19 1L1 19" /></Ico></WindowButton>
        </TitleRight>
      </TitleBar>

      <TabRow>
        {['File', 'Home', 'Insert', 'Draw', 'Page Layout', 'Formulas', 'Data', 'Review', 'View', 'Help'].map(t => (
          <RibbonTab key={t} $first={t === 'File'} $active={t === 'Home'}>{t}</RibbonTab>
        ))}
        <TabSpacer />
        <Pill><Ico w={19} h={20}><path d="M1 1h17v13H9l-5 5v-5H1z" /></Ico>Comments</Pill>
        <Pill $primary><Ico w={21} h={22} s="#fff"><path d="M6 8H1v13h17v-6M6 15c0-6 4-9 8-9V1l6 7-6 6v-4c-4 0-6 1-8 5z" /></Ico>Share</Pill>
      </TabRow>

      <Ribbon>
        <Group w={102} label="Undo" pad={12}>
          <Stack>
            <Row><Tool $w={54} aria-label="Undo"><UndoIcon /></Tool><Tool $w={16} aria-label="Undo list"><Chev c="#bdbdbd" /></Tool></Row>
            <Row><Tool $w={54} aria-label="Redo"><UndoIcon flip /></Tool><Tool $w={16} aria-label="Redo list"><Chev c="#bdbdbd" /></Tool></Row>
          </Stack>
        </Group>
        <Group w={174} label="Clipboard" pad={10} launch>
          <BigTool $w={82}><i><Clipboard /></i><span>Paste</span><span><Chev /></span></BigTool>
          <Stack>
            <Row><Tool $w={36} aria-label="Cut"><Cut /></Tool></Row>
            <Row><Tool $w={36} aria-label="Copy"><Copy /></Tool><Tool $w={34} aria-label="Copy options"><Chev /></Tool></Row>
            <Row><Tool $w={36} aria-label="Format Painter"><Brush /></Tool></Row>
          </Stack>
        </Group>
        <Group w={419} label="Font" launch>
          <Stack $two>
            <Row $two $pad={13}>
              <SelectBox $w={207}><select aria-label="Font"><option>Arial</option></select><Chev /></SelectBox>
              <SelectBox $w={87}><select aria-label="Font size"><option>10</option></select><Chev /></SelectBox>
              <Tool $w={46} aria-label="Increase font size"><GrowA /></Tool>
              <Tool $w={50} aria-label="Decrease font size"><GrowA down /></Tool>
            </Row>
            <Row $two $pad={10}>
              <Tool $w={48}><Glyph $kind="b">B</Glyph></Tool>
              <Tool $w={46}><Glyph $kind="i">I</Glyph></Tool>
              <Tool $w={46}><Glyph $kind="u">U</Glyph></Tool>
              <Tool $w={26} aria-label="Underline options"><Chev /></Tool>
              <Bar $gap={4} />
              <Tool $w={38} aria-label="Borders"><Borders /></Tool>
              <Tool $w={32} aria-label="Border options"><Chev /></Tool>
              <Bar $gap={4} />
              <Tool $w={40} aria-label="Fill color"><Fill /></Tool>
              <Tool $w={30} aria-label="Fill options"><Chev /></Tool>
              <Tool $w={46} aria-label="Font color"><FontColor /></Tool>
              <Tool $w={24} aria-label="Font color options"><Chev /></Tool>
            </Row>
          </Stack>
        </Group>
        <Group w={580} label="Alignment" pad={10} launch>
          <Stack $two>
            <Row $two>
              <Tool $w={48} aria-label="Top align"><Lines y={1} rows={[[1, 25], [5, 21], [1, 25]]} /></Tool>
              <Tool $w={46} aria-label="Middle align"><Lines y={7} rows={[[1, 25], [5, 21], [1, 25]]} /></Tool>
              <PressedTool $w={43} aria-label="Bottom align"><Lines y={14} rows={[[1, 25], [5, 21], [1, 25]]} /></PressedTool>
              <Bar $gap={1} />
              <Tool $w={44} aria-label="Orientation"><Orient /></Tool>
              <Tool $w={20} aria-label="Orientation options"><Chev /></Tool>
              <Bar $gap={11} />
              <Tool $w={30} aria-label="Text direction"><Para /></Tool>
              <Tool $w={36} aria-label="Text direction options"><Chev /></Tool>
              <i />
            </Row>
            <Row $two>
              <Tool $w={48} aria-label="Align left"><Lines rows={[[1, 25], [1, 19], [1, 25], [1, 19]]} /></Tool>
              <Tool $w={46} aria-label="Center"><Lines rows={[[1, 25], [4, 22], [1, 25], [4, 22]]} /></Tool>
              <Tool $w={49} aria-label="Align right"><Lines rows={[[1, 25], [7, 25], [1, 25], [7, 25]]} /></Tool>
              <Bar $gap={1} />
              <Tool $w={44} aria-label="Decrease indent"><Indent out /></Tool>
              <Tool $w={50} aria-label="Increase indent"><Indent /></Tool>
            </Row>
          </Stack>
          <Stack $two><Bar $gap={5} $h={112} /></Stack>
          <Stack $two>
            <Row $two $pad={10}><TextTool><span><Wrap /></span>Wrap Text</TextTool></Row>
            <Row $two $pad={10}><TextTool $gap={26}><span><Merge /></span>Merge &amp; Center<Chev /></TextTool></Row>
          </Stack>
        </Group>
        <Group w={289} label="Number" launch>
          <Stack $two>
            <Row $two $pad={14}><SelectBox $w={262}><select aria-label="Number format"><option>General</option></select><Chev /></SelectBox></Row>
            <Row $two $pad={12}>
              <Tool $w={42}><Glyph>$</Glyph></Tool>
              <Tool $w={30} aria-label="Currency options"><Chev /></Tool>
              <Tool $w={46} aria-label="Percent"><Ico w={28} h={26}><circle cx="7" cy="7" r="5.500" /><circle cx="20" cy="19" r="5.500" /><path d="M21 1L6 25" /></Ico></Tool>
              <Tool $w={50} aria-label="Comma style"><svg width="15" height="22" viewBox="0 0 16 24"><path d="M7 1c5 0 8 3 8 8 0 7-5 12-12 14l-1-2c4-2 6-4 7-7-5 1-8-2-8-6 0-4 3-7 6-7z" fill="#3b3b3b" /></svg></Tool>
              <Bar $gap={2} />
              <Tool $w={44} aria-label="Increase decimal"><Decimals /></Tool>
              <Tool $w={48} aria-label="Decrease decimal"><Decimals less /></Tool>
            </Row>
          </Stack>
        </Group>
        <Group w={346} label="Styles" pad={13}>
          <BigTool $w={130}><i><CondFormat /></i><span>Conditional</span><span>Formatting <Chev /></span></BigTool>
          <BigTool $w={108}><i><FormatTable /></i><span>Format as</span><span>Table <Chev /></span></BigTool>
          <BigTool $w={82}><i><CellStyles /></i><span>Cell</span><span>Styles <Chev /></span></BigTool>
        </Group>
        <Group w={174} label="Cells" pad={18}>
          <Stack>
            <Row><TextTool $gap={22}><span><CellIcon kind="insert" /></span>Insert<Chev /></TextTool></Row>
            <Row><TextTool $gap={22}><span><CellIcon kind="delete" /></span>Delete<Chev /></TextTool></Row>
            <Row><TextTool $gap={6}><span><CellIcon kind="format" /></span>Format<Chev /></TextTool></Row>
          </Stack>
        </Group>
        <Group w={264} label="Editing" pad={10}>
          <Stack>
            <Row><Tool $w={48} aria-label="AutoSum"><Sigma /></Tool><Tool $w={22} aria-label="AutoSum options"><Chev /></Tool></Row>
            <Row><Tool $w={48} aria-label="Fill"><FillDown /></Tool><Tool $w={16} aria-label="Fill options"><Chev /></Tool></Row>
            <Row><Tool $w={48} aria-label="Clear"><Eraser /></Tool><Tool $w={16} aria-label="Clear options"><Chev /></Tool></Row>
          </Stack>
          <BigTool $w={88}><i><SortFilter /></i><span>Sort &amp;</span><span>Filter <Chev /></span></BigTool>
          <BigTool $w={80}><i><Find /></i><span>Find &amp;</span><span>Select <Chev /></span></BigTool>
        </Group>
        <Group w={109} label="Analysis">
          <BigTool $w={109} $off><i><Analyze /></i><span>Analyze</span><span>Data</span></BigTool>
        </Group>
        <Group w={128} label="Sensitivity">
          <BigTool $w={128} $off><i><Sensitivity /></i><span>Sensitivity</span><span><Chev c="#bdbdbd" /></span></BigTool>
        </Group>
        <Collapse aria-label="Collapse ribbon"><Chev big /></Collapse>
      </Ribbon>

      <FormulaBar>
        <Field $w={177}><input aria-label="Name box" defaultValue="Y35" /><Chev big /></Field>
        <Dots><i /><i /><i /></Dots>
        <FxTools $w={127}>
          <button aria-label="Cancel"><Ico w={22} h={24} s="#b0b0b0"><path d="M1 2l20 20M21 2L1 22" /></Ico></button>
          <button aria-label="Enter"><Ico w={28} h={24} s="#b0b0b0"><path d="M1 13l8 8L27 2" /></Ico></button>
          <Fx aria-label="Insert function">fx</Fx>
        </FxTools>
        <Field><input aria-label="Formula" /><Chev big /></Field>
      </FormulaBar>

      <SheetArea>
        <Viewport>
          <Grid>
            <colgroup>
              <col style={{ width: 48 }} />
              {columns.map(([n, w]) => <col key={n} style={{ width: w }} />)}
            </colgroup>
            <thead>
              <tr>
                <Corner aria-label="Select all"><Tri w={22} h={22} d="M21 1v20H1z" c="#dcdcdc" /></Corner>
                {columns.map(([n]) => <ColHead key={n} scope="col" $on={n === 'Y'} $double={n === 'C'}>{n}</ColHead>)}
              </tr>
            </thead>
            <tbody>
              {rows.map(r => (
                <tr key={r.n} style={{ height: r.h ?? 34 }}>
                  <RowHead scope="row" $on={r.n === 35} $double={r.n === 7 || r.n === 22} $low={r.low}>{r.n}</RowHead>
                  <RowCells row={r} />
                </tr>
              ))}
            </tbody>
          </Grid>
          <Picture>
            <colgroup>
              <col style={{ width: 350 }} /><col style={{ width: 205 }} /><col style={{ width: 163 }} /><col style={{ width: 120 }} /><col />
            </colgroup>
            <tbody>
              <tr style={{ height: 26 }}><PTitle colSpan={4} $a="center">Observed Frequencies</PTitle><td /></tr>
              <tr style={{ height: 31 }}><PCell /><PCell colSpan={2} $blue $a="center">Deaths</PCell><PCell /><td /></tr>
              <tr style={{ height: 93 }}>
                <PCell $tall $blue $a="center">Nurse</PCell>
                <PCell $tall $blue $a="center">Shifts with<br />death</PCell>
                <PCell $tall $blue $a="center">Shifts<br />without a<br />death</PCell>
                <PCell $tall $a="center">Total</PCell><td />
              </tr>
              <tr style={{ height: 31 }}><PCell $blue>Gilbert was working</PCell><PCell $blue>40</PCell><PCell $blue>217</PCell><PCell>257</PCell><td /></tr>
              <tr style={{ height: 31 }}><PCell $blue>Gilbert was not working</PCell><PCell $blue>34</PCell><PCell $blue>1350</PCell><PCell>1384</PCell><td /></tr>
              <tr style={{ height: 31 }}><PCell>Total</PCell><PCell>74</PCell><PCell>1567</PCell><PCell>1641</PCell><td /></tr>
              <tr style={{ height: 14 }}><PEdge $c="#d0d0d0" /><PEdge $c="#d0d0d0" /><PEdge $c="#d0d0d0" /><PEdge $c={green} /><PEdge $green /></tr>
            </tbody>
          </Picture>
        </Viewport>
        <VScroll>
          <Tri w={16} h={14} d="M8 2l6 10H2z" /><VThumb /><Tri w={16} h={14} d="M8 12L2 2h12z" />
        </VScroll>
      </SheetArea>

      <SheetTabs>
        <TabArrows><Tri w={9} h={14} d="M7 2v10L2 7z" c="#c0c0c0" /><Tri w={9} h={14} d="M2 2v10l5-5z" c="#c0c0c0" /></TabArrows>
        {['Prb1', 'Prb2', 'Prb3', 'Prb4', 'Prb5'].map(t => <SheetTab key={t} $on={t === 'Prb3'}>{t}</SheetTab>)}
        <AddSheet aria-label="New sheet"><Ico w={24} h={24} s="#7a7a7a"><circle cx="12" cy="12" r="10.500" /><path d="M12 6v12M6 12h12" /></Ico></AddSheet>
        <HScroll>
          <HDots><i /><i /><i /></HDots>
          <Tri w={22} h={16} d="M20 2v12l-9-6z" /><HThumb /><Tri w={13} h={16} d="M2 2v12l9-6z" />
        </HScroll>
      </SheetTabs>

      <StatusBar>
        Ready
        <Access><AccessIcon />Accessibility: Unavailable</Access>
        <ViewButton $on aria-label="Normal"><Ico w={24} h={24}><path d="M1 1h22v22H1zM1 8h22M1 15h22M8 1v22M16 1v22" /></Ico></ViewButton>
        <ViewButton aria-label="Page layout"><Ico w={26} h={24}><path d="M1 1h24v22H1zM6 5h14v15H6zM9 9h8M9 13h8M9 16h8" /></Ico></ViewButton>
        <ViewButton aria-label="Page break preview"><Ico w={24} h={24}><path d="M1 1h22v22H1zM8 1v13M1 14h15V1" /></Ico></ViewButton>
        <ZoomStep aria-label="Zoom out"><Ico w={14} h={14}><path d="M0 7h14" /></Ico></ZoomStep>
        <Zoom type="range" min={0} max={200} defaultValue={94} aria-label="Zoom" />
        <ZoomStep aria-label="Zoom in"><Ico w={14} h={14}><path d="M0 7h14M7 0v14" /></Ico></ZoomStep>
        <ZoomValue>100%</ZoomValue>
      </StatusBar>

      <Taskbar>
        <Weather>
          <svg width="38" height="32" viewBox="0 0 38 32"><circle cx="12" cy="12" r="11" fill="#fdb827" /><path d="M10 31a8 8 0 010-16 11 11 0 0120-2 9 9 0 01-1 18z" fill="#c9e1f5" /><path d="M10 28a6 6 0 010-11 9 9 0 0114-2" fill="#e9f4fc" /></svg>
          <div><span>47°F</span><span>Mostly cloudy</span></div>
        </Weather>
        <Dock>
          {dock.map(d => <DockButton key={d.name} aria-label={d.name} $on={d.on} $dot={d.dot} $dw={d.dw}>{d.icon}</DockButton>)}
        </Dock>
        <Tray>
          <TrayButton $w={50} aria-label="Hidden icons"><Ico w={18} h={12}><path d="M1 10l8-8 8 8" /></Ico></TrayButton>
          <TrayButton $w={76} aria-label="Keyboard"><Ico w={32} h={24} s="#1a1a1a"><rect x="1" y="1" width="30" height="22" rx="3" /><path d="M6 7h20M9 13h15" strokeDasharray="3 3" /><path d="M7 18h18" /></Ico></TrayButton>
          <TrayButton $w={66} aria-label="Touchpad"><Ico w={30} h={26} s="#1a1a1a"><rect x="1" y="1" width="28" height="24" rx="2" /><path d="M1 16h28M15 16v9" /></Ico></TrayButton>
          <TrayButton $w={84}>ENG</TrayButton>
          <TrayButton $w={46} aria-label="Wi-Fi"><Ico w={30} h={24} s="#1a1a1a"><path d="M2 9c8-9 18-9 26 0M6 13c6-6 12-6 18 0M10 17c3-3 7-3 10 0" /><circle cx="15" cy="21" r="2" fill="#1a1a1a" /></Ico></TrayButton>
          <TrayButton $w={40} aria-label="Volume"><Ico w={30} h={24} s="#1a1a1a"><path d="M2 8h5l6-6v20l-6-6H2zM17 8c2 3 2 5 0 8M21 5c4 5 4 9 0 14M25 2c5 7 5 13 0 20" /></Ico></TrayButton>
          <TrayButton $w={42} aria-label="Battery"><Ico w={30} h={24} s="#1a1a1a"><path d="M16 4h8q2 0 2 2v12q0 2-2 2H11M28 10v5" /><path d="M3 20C-1 11 4 4 13 2c1 9-1 16-7 16z" fill="#1a1a1a" stroke="none" /><path d="M1 23c1-6 4-10 8-14" stroke="#f0f0f0" /><path d="M21 8v8h-6l3-8z" fill="#1a1a1a" stroke="none" /></Ico></TrayButton>
          <Clock>1:31 PM<br />4/19/2022</Clock>
          <Badge>3</Badge>
        </Tray>
      </Taskbar>
    </Shell>
  );
}
